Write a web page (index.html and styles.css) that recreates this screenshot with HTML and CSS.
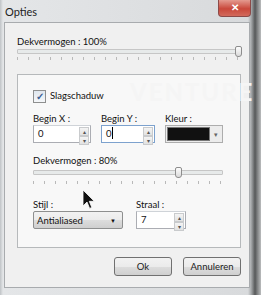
FILE: index.html
```html
<!DOCTYPE html>
<html>
<head>
  <title>Opties</title>
  <link rel="stylesheet" href="styles.css">
</head>
<body>

  <div class="window">
    <div class="titlebar">
      <span class="title">Opties</span>
      <span class="close">&#x2715;</span>
    </div>

    <div class="client">
      <div class="label">Dekvermogen : 100%</div>
      <div class="slider wide">
        <div class="track"></div>
        <div class="thumb" style="left: 100%"></div>
      </div>
      <div class="ticks wide"></div>

      <div class="panel">
        <div class="watermark">VENTURE</div>
        <label class="check"><span class="box">&#x2713;</span>Slagschaduw</label>

        <div class="row">
          <div class="field">
            <div class="label">Begin X :</div>
            <div class="spin w58"><span class="val">0</span><span class="arrows"><i>&#x25B4;</i><i>&#x25BE;</i></span></div>
          </div>
          <div class="field">
            <div class="label">Begin Y :</div>
            <div class="spin w54 focus"><span class="val">0<b class="caret"></b></span><span class="arrows"><i>&#x25B4;</i><i>&#x25BE;</i></span></div>
          </div>
          <div class="field">
            <div class="label">Kleur :</div>
            <div class="color"><span class="swatch"></span><span class="drop">&#x25BE;</span></div>
          </div>
        </div>

        <div class="label op">Dekvermogen : 80%</div>
        <div class="slider inner">
          <div class="track"></div>
          <div class="thumb" style="left: 77%"></div>
        </div>
        <div class="ticks inner"></div>

        <div class="row low">
          <div class="field">
            <div class="label">Stijl :</div>
            <div class="select"><span>Antialiased</span><span class="caretdown">&#x25BC;</span></div>
          </div>
          <div class="field">
            <div class="label">Straal :</div>
            <div class="spin w50"><span class="val">7</span><span class="arrows"><i>&#x25B4;</i><i>&#x25BE;</i></span></div>
          </div>
        </div>

        <svg class="cursor" width="13" height="21" viewBox="0 0 13 21">
          <path d="M1 1 L1 17 L5 13 L7.6 19.4 L9.8 18.5 L7.3 12.3 L12.3 12.3 Z" fill="#111" stroke="#fff" stroke-width="0.8"/>
        </svg>
      </div>

      <div class="buttons">
        <button>Ok</button>
        <button>Annuleren</button>
      </div>
    </div>
  </div>

</body>
</html>
```

FILE: styles.css
```css
body {
  margin: 0;
  font-family: Lato, "Open Sans", sans-serif;
  font-size: 9.5px;
  color: #111;
  background: #6a6a6a;
}
.window {
  width: 261px;
  height: 295px;
  box-sizing: border-box;
  padding: 0 11px 7px 4px;
  display: flex;
  flex-direction: column;
  background: linear-gradient(90deg, #bfc3c6 0, #e4e6e8 3px, #d8dadc 248px, #a9acae 251px, #565859 255px, #8a8c8d 258px, #bbbdbe 261px);
}
.titlebar {
  height: 22px;
  flex: none;
  position: relative;
  display: flex;
  align-items: center;
}
.title {
  margin-left: 1px;
  margin-top: 1px;
  font-size: 11px;
  color: #222;
}
.close {
  position: absolute;
  right: -1px;
  top: 0;
  width: 31px;
  height: 16px;
  border: 1px solid #8c4a48;
  border-top: none;
  border-radius: 0 0 4px 4px;
  background: linear-gradient(#e49a8f, #c9483b 55%, #d26a5c);
  color: #fff;
  font-size: 10px;
  font-weight: bold;
  text-align: center;
  line-height: 15px;
}
.client {
  flex: 1;
  background: #f0f0f0;
  border: 1px solid #a8abae;
  padding: 12px 8px 0 12px;
}
.label {
  line-height: 14px;
  white-space: nowrap;
}
.slider {
  position: relative;
  height: 10px;
  margin-top: -3px;
}
.slider.inner { width: 192px; margin-top: -1px; }
.track {
  position: absolute;
  left: 0;
  right: 2px;
  top: 3px;
  height: 3px;
  background: #e7eaea;
  border: 1px solid #c6c6c6;
  border-radius: 1px;
}
.thumb {
  position: absolute;
  top: 0;
  margin-left: -6px;
  width: 5px;
  height: 9px;
  border: 1px solid #8d8d8d;
  border-radius: 2px 2px 3px 3px;
  background: linear-gradient(#fdfdfd, #dadada);
}
.ticks {
  height: 3px;
  margin-top: 1px;
  background: repeating-linear-gradient(90deg, #b9b9b9 0 1px, transparent 1px 11px);
}
.ticks.wide { width: 222px; }
.ticks.inner { width: 192px; margin-top: 4px; }
.panel {
  position: relative;
  margin-top: 14px;
  height: 174px;
  width: 224px;
  border: 1px solid #b6b9bb;
  background: #f8f8f8;
  padding: 14px 0 0 15px;
  box-sizing: border-box;
}
.watermark {
  position: absolute;
  left: 112px;
  top: 2px;
  font-size: 24px;
  font-weight: bold;
  letter-spacing: 2px;
  color: #f5f5f5;
}
.check {
  position: relative;
  display: flex;
  align-items: center;
  gap: 4px;
  line-height: 14px;
}
.box {
  width: 11px;
  height: 11px;
  border: 1px solid #8e8f8f;
  background: linear-gradient(#dfe6ee, #f5f7f9);
  color: #3c5f95;
  font-size: 10px;
  font-weight: bold;
  line-height: 11px;
  text-align: center;
}
.row {
  position: relative;
  display: flex;
  gap: 10px;
  margin-top: 9px;
}
.row.low { margin-top: 14px; gap: 13px; }
.field .label { line-height: 13px; }
.spin {
  height: 18px;
  box-sizing: border-box;
  border: 1px solid #abadb3;
  border-top-color: #cfd3d8;
  background: #fff;
  display: flex;
  justify-content: space-between;
}
.spin.focus { border-color: #7da2ce; }
.w58 { width: 58px; }
.w54 { width: 54px; }
.w50 { width: 50px; }
.val {
  padding: 1px 0 0 4px;
  line-height: 14px;
}
.caret {
  display: inline-block;
  width: 1px;
  height: 12px;
  background: #000;
  vertical-align: -2px;
}
.arrows {
  display: flex;
  flex-direction: column;
  width: 10px;
  margin: 1px 1px 1px 0;
}
.arrows i {
  flex: 1;
  font-style: normal;
  font-size: 6px;
  line-height: 7px;
  text-align: center;
  color: #555;
  border: 1px solid #c9cbcd;
  background: linear-gradient(#f4f4f4, #e2e2e2);
}
.color {
  width: 58px;
  height: 18px;
  box-sizing: border-box;
  border: 1px solid #adadad;
  background: #ececec;
  display: flex;
  padding: 1px;
}
.swatch {
  flex: 1;
  background: #111;
  border: 1px solid #777;
}
.drop {
  width: 11px;
  font-size: 7px;
  text-align: center;
  line-height: 15px;
  color: #666;
}
.op { margin-top: 11px; }
.select {
  width: 90px;
  height: 18px;
  box-sizing: border-box;
  border: 1px solid #8e8f8f;
  border-radius: 2px;
  background: linear-gradient(#f2f2f2, #ebebeb 50%, #dddddd 51%, #cfcfcf);
  display: flex;
  justify-content: space-between;
  align-items: center;
  padding: 0 6px 0 3px;
}
.caretdown { font-size: 6px; }
.cursor {
  position: absolute;
  left: 64px;
  top: 114px;
}
.buttons {
  display: flex;
  justify-content: flex-end;
  gap: 11px;
  margin-top: 9px;
  width: 224px;
}
button {
  width: 58px;
  height: 19px;
  padding: 0;
  font-family: inherit;
  font-size: 9.5px;
  color: #222;
  border: 1px solid #707070;
  border-radius: 3px;
  background: linear-gradient(#f2f2f2, #ebebeb 50%, #dddddd 51%, #cfcfcf);
}
```
